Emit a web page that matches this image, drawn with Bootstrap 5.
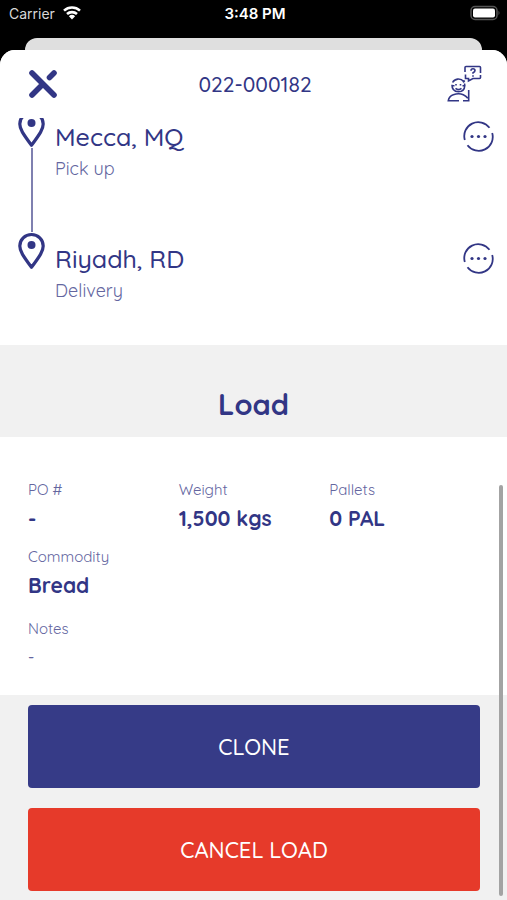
<!DOCTYPE html>
<html lang="en">
<head>
<meta charset="utf-8">
<meta name="viewport" content="width=device-width, initial-scale=1">
<title>Load 022-000182</title>
<link href="https://cdn.jsdelivr.net/npm/bootstrap@5.3.0/dist/css/bootstrap.min.css" rel="stylesheet">
<style>
  :root { --navy: #323685; --soft: #64669f; --band: #f1f1f1; }
  body { font-family: Quicksand, Lato, "Open Sans", sans-serif; color: var(--navy); background: #fff; }
  svg { display: block; flex: none; }
  .status { font-family: Inter, sans-serif; height: 38px; font-size: 14px; line-height: 28px; padding: 0 6px 0 9px; }
  .status .side { flex: 1 1 0; }
  .carrier { color: #d8d8d8; }
  .clock { font-size: 15px; font-weight: 600; }
  .behind { height: 12px; margin: 0 25px; background: #dfdfdf; border-radius: 12px 12px 0 0; }
  .sheet { border-radius: 15px 15px 0 0; }
  .sheet-head { height: 68px; padding: 0 25px 0 28px; z-index: 2; border-radius: 15px 15px 0 0; }
  .sheet-head .side { flex: 1 1 0; }
  .sheet-head h1 { font-size: 21px; line-height: 28px; font-weight: 500; }
  .plain { border: 0; padding: 0; background: none; color: inherit; }
  .stops { margin-top: -8px; padding: 0 13px 0 17px; }
  .stop { height: 122px; gap: 9px; }
  .stop:last-child { height: 113px; }
  .track { width: 29px; }
  .track .rail { width: 2px; background: #7f80b0; }
  .stop h2 { font-size: 25px; line-height: 32px; font-weight: 500; margin: 11px 0 5px; }
  .stop p { font-size: 18px; line-height: 22px; color: var(--soft); }
  .stop .plain { margin-top: 11px; }
  .band { background: var(--band); }
  .band h2 { font-size: 29px; line-height: 36px; font-weight: 700; padding: 41px 0 15px; }
  .facts { padding: 43px 27px 24px 28px; }
  .facts dt { font-size: 15px; line-height: 20px; font-weight: 400; color: var(--soft); margin-bottom: 4px; }
  .facts dd { font-size: 21px; line-height: 28px; font-weight: 700; margin-bottom: 15px; }
  .facts .gap-below { margin-bottom: 20px; }
  .facts .note { font-size: 16px; font-weight: 500; color: var(--soft); margin: 0; }
  .actions { padding: 10px 27px 9px 28px; gap: 20px; background: var(--band); }
  .actions .btn { height: 83px; padding: 6px 0 4px; font-size: 22px; font-weight: 500; border: 0; border-radius: 4px; color: #fff; }
  .clone, .clone:hover { background: #363b87; }
  .cancel, .cancel:hover { background: #e63a2a; }
  .thumb { right: 4px; top: 485px; bottom: 4px; width: 4px; border-radius: 2px; background: #a3a3a3; z-index: 3; }
</style>
<script src="https://cdn.jsdelivr.net/npm/bootstrap@5.3.0/dist/js/bootstrap.bundle.min.js"></script>
</head>
<body>
<div class="position-relative">
  <div class="bg-black">
    <div class="status d-flex text-white">
      <div class="side d-flex carrier">
        <span>Carrier</span>
        <svg class="ms-2 mt-1" width="20" height="18" viewBox="0 0 20 18" fill="none" stroke="#fff" stroke-width="2.600"><path d="M1 6.600a12 12 0 0 1 16 0M4 10a7.500 7.500 0 0 1 10 0"/><path d="M9 15.500 5.900 12.300a4.500 4.500 0 0 1 6.200 0Z" fill="#fff" stroke="none"/></svg>
      </div>
      <span class="clock">3:48 PM</span>
      <div class="side d-flex justify-content-end">
        <svg class="mt-1" width="31" height="18" viewBox="0 0 31 18"><rect x="1" y="2.500" width="26" height="13" rx="4" fill="none" stroke="#555" stroke-width="1.500"/><rect x="3" y="4.500" width="22" height="9" rx="2" fill="#fff"/><path d="M28.500 6.800q2 2.200 0 4.400Z" fill="#555"/></svg>
      </div>
    </div>
    <div class="behind"></div>
    <div class="sheet bg-white">
      <header class="sheet-head position-relative d-flex align-items-center bg-white">
        <div class="side d-flex">
          <button class="plain" type="button" aria-label="Close">
            <svg width="30" height="30" viewBox="0 0 30 30" stroke="currentColor" stroke-width="5.600" stroke-linecap="round"><path d="M4 4 26 26M4 26 15 15M21.500 8.500 26 4"/></svg>
          </button>
        </div>
        <h1 class="m-0">022-000182</h1>
        <div class="side d-flex justify-content-end">
          <button class="plain" type="button" aria-label="Help">
            <svg width="36" height="40" viewBox="0 0 36 40" fill="none" stroke="currentColor" stroke-width="1.600"><path d="M20 2.500h13.500q1 0 1 1V9M34.500 11v2.500q0 1-1 1H27L22.500 17v-2.500h-3v-4M19 8V3.500q0-1 1-1"/><path d="M25 6.700q0-2 2-2t2 1.900q0 1.300-2 2.200v1M27 11.200v1.500"/><path d="M6.600 18.500q1.500-2.900 5-3.400 4-.3 6 2.400M17.200 18.500l1.500-2M6 20.800q-.2 6.700 6.500 7 6-.2 6.300-6.300l-.3-2M6 21.700h2.500M16.500 21.700h2M9.500 24.300q3 2.500 6 0"/><path d="M10 20v1.500M14.500 20v1.500"/><path d="M13 36.700H2.300q.7-4.600 5-6 5.500-1.900 10 0 3 1.300 4.500 3.600M17 36.700h5.700V26"/></svg>
          </button>
        </div>
      </header>
      <section class="stops">
        <article class="stop d-flex">
          <div class="track d-flex flex-column align-items-center">
            <svg width="29" height="38" viewBox="0 0 29 38"><path d="M14.500 2.500C8 2.500 2.800 7.500 2.800 14c0 5 3 9.500 11.700 21.300C23.200 23.500 26.200 19 26.200 14c0-6.500-5.200-11.500-11.700-11.500Z" fill="none" stroke="currentColor" stroke-width="3.200" stroke-linejoin="round"/><circle cx="14.500" cy="13" r="4" fill="currentColor"/></svg>
            <div class="rail flex-fill"></div>
          </div>
          <div class="flex-fill"><h2>Mecca, MQ</h2><p class="m-0">Pick up</p></div>
          <button class="plain align-self-start" type="button" aria-label="Pick up options">
            <svg width="31" height="31" viewBox="0 0 31 31" fill="none" stroke="currentColor" stroke-width="1.800"><path d="M1.800 19A14 14 0 0 1 26.500 6.800M29.200 12A14 14 0 0 1 4.500 24.200"/><g fill="currentColor" stroke="none"><circle cx="9" cy="15.500" r="1.600"/><circle cx="15.500" cy="15.500" r="1.600"/><circle cx="22" cy="15.500" r="1.600"/></g></svg>
          </button>
        </article>
        <article class="stop d-flex">
          <div class="track">
            <svg width="29" height="38" viewBox="0 0 29 38"><path d="M14.500 2.500C8 2.500 2.800 7.500 2.800 14c0 5 3 9.500 11.700 21.300C23.200 23.500 26.200 19 26.200 14c0-6.500-5.200-11.500-11.700-11.500Z" fill="none" stroke="currentColor" stroke-width="3.200" stroke-linejoin="round"/><circle cx="14.500" cy="13" r="4" fill="currentColor"/></svg>
          </div>
          <div class="flex-fill"><h2>Riyadh, RD</h2><p class="m-0">Delivery</p></div>
          <button class="plain align-self-start" type="button" aria-label="Delivery options">
            <svg width="31" height="31" viewBox="0 0 31 31" fill="none" stroke="currentColor" stroke-width="1.800"><path d="M1.800 19A14 14 0 0 1 26.500 6.800M29.200 12A14 14 0 0 1 4.500 24.200"/><g fill="currentColor" stroke="none"><circle cx="9" cy="15.500" r="1.600"/><circle cx="15.500" cy="15.500" r="1.600"/><circle cx="22" cy="15.500" r="1.600"/></g></svg>
          </button>
        </article>
      </section>
      <div class="band"><h2 class="text-center m-0">Load</h2></div>
      <dl class="facts m-0">
        <div class="row g-0">
          <div class="col-4"><dt>PO #</dt><dd>-</dd></div>
          <div class="col-4"><dt>Weight</dt><dd>1,500 kgs</dd></div>
          <div class="col-4"><dt>Pallets</dt><dd>0 PAL</dd></div>
        </div>
        <dt>Commodity</dt><dd class="gap-below">Bread</dd>
        <dt>Notes</dt><dd class="note">-</dd>
      </dl>
      <div class="actions d-grid">
        <button class="btn clone" type="button">CLONE</button>
        <button class="btn cancel" type="button">CANCEL LOAD</button>
      </div>
    </div>
  </div>
  <div class="thumb position-absolute"></div>
</div>
</body>
</html>
